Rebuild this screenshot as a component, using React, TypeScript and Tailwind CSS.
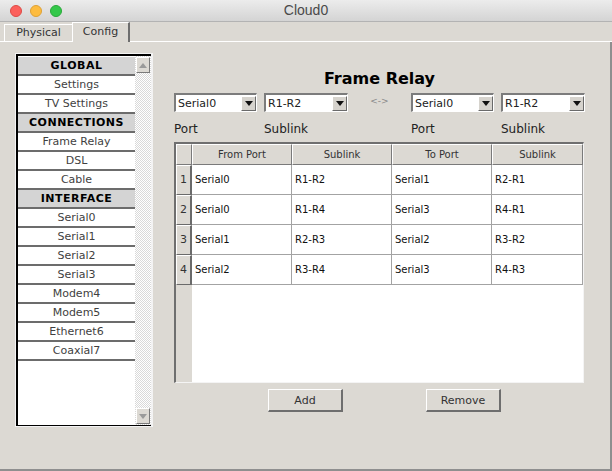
import React from 'react';

type SideItem = { label: string; header?: boolean };

const sideItems: SideItem[] = [
  { label: 'GLOBAL', header: true },
  { label: 'Settings' },
  { label: 'TV Settings' },
  { label: 'CONNECTIONS', header: true },
  { label: 'Frame Relay' },
  { label: 'DSL' },
  { label: 'Cable' },
  { label: 'INTERFACE', header: true },
  { label: 'Serial0' },
  { label: 'Serial1' },
  { label: 'Serial2' },
  { label: 'Serial3' },
  { label: 'Modem4' },
  { label: 'Modem5' },
  { label: 'Ethernet6' },
  { label: 'Coaxial7' },
];

const rows = [
  ['Serial0', 'R1-R2', 'Serial1', 'R2-R1'],
  ['Serial0', 'R1-R4', 'Serial3', 'R4-R1'],
  ['Serial1', 'R2-R3', 'Serial2', 'R3-R2'],
  ['Serial2', 'R3-R4', 'Serial3', 'R4-R3'],
];

const colWidths = ['w-[100px]', 'w-[100px]', 'w-[100px]', 'w-[91px]'];

function Combo({ value, wide }: { value: string; wide?: boolean }) {
  return (
    <div
      className={`${wide ? 'w-[84px]' : 'w-[83px]'} h-[19px] flex items-center bg-white border-t-2 border-l-2 border-t-[#7c7c7c] border-l-[#7c7c7c] border-r border-b border-r-white border-b-white`}
    >
      <span className="flex-1 pl-[2px] pt-px text-[11px] leading-[15px] text-[#222]">{value}</span>
      <div className="w-[15px] h-[15px] flex items-center justify-center bg-[#d6d3cd] border-t border-l border-white border-r border-b border-r-[#6a6a6a] border-b-[#6a6a6a]">
        <svg width="8" height="5" viewBox="0 0 8 5">
          <path d="M0 0 H8 L4 5 Z" fill="#111" />
        </svg>
      </div>
    </div>
  );
}

function ScrollButton({ up }: { up?: boolean }) {
  return (
    <div className="w-[14px] h-[16px] mx-auto flex items-center justify-center bg-[#dcd9d3] border-t border-l border-white border-r border-b border-r-[#7a7a7a] border-b-[#7a7a7a]">
      <svg width="8" height="5" viewBox="0 0 8 5">
        <path d={up ? 'M0 5 H8 L4 0 Z' : 'M0 0 H8 L4 5 Z'} fill="#9a9a9a" />
      </svg>
    </div>
  );
}

function SideList() {
  return (
    <div className="w-[138px] h-[374px] border border-[#f3f3f3] border-r-2">
      <div className="h-full flex border-t-2 border-l-2 border-b border-black">
        <div className="flex-1 bg-white flex flex-col pt-px">
          {sideItems.map((item) =>
            item.header ? (
              <div
                key={item.label}
                className="h-[19px] bg-[#d4d4d4] border-b-2 border-[#6c6c6c] text-center text-[11px] leading-[18px] font-bold tracking-[0.5px] text-black"
              >
                {item.label}
              </div>
            ) : (
              <div
                key={item.label}
                className="h-[19px] border-b-2 border-[#6c6c6c] text-center text-[11px] leading-[18px] text-[#3f3f3f]"
              >
                {item.label}
              </div>
            )
          )}
        </div>
        <div className="w-[16px] flex flex-col justify-between py-px bg-[repeating-conic-gradient(#d9d9d9_0%_25%,#ffffff_0%_50%)] bg-[length:2px_2px]">
          <ScrollButton up />
          <ScrollButton />
        </div>
      </div>
    </div>
  );
}

function HeaderCell({ w, label }: { w: string; label: string }) {
  return (
    <div
      className={`${w} h-[21px] bg-[#dcd9d3] border-t border-l border-white border-r border-b border-r-[#7a7a7a] border-b-[#7a7a7a] text-center text-[10px] leading-[19px] text-[#333]`}
    >
      {label}
    </div>
  );
}

function RoutesTable() {
  return (
    <div className="w-[410px] h-[241px] flex flex-col bg-white border-t-2 border-l-2 border-t-[#6f6f6f] border-l-[#6f6f6f] border-r border-b border-r-[#f4f4f4] border-b-[#f4f4f4]">
      <div className="flex">
        <div className="w-[16px] h-[21px] bg-[#dcd9d3] border-t border-l border-white border-r border-b border-r-[#7a7a7a] border-b-[#7a7a7a]" />
        <HeaderCell w={colWidths[0]} label="From Port" />
        <HeaderCell w={colWidths[1]} label="Sublink" />
        <HeaderCell w={colWidths[2]} label="To Port" />
        <HeaderCell w={colWidths[3]} label="Sublink" />
      </div>
      {rows.map((r, i) => (
        <div key={i} className="flex h-[30px]">
          <div className="w-[16px] bg-[#dcd9d3] border-t border-l border-white border-r-2 border-b border-r-[#6a6a6a] border-b-[#6a6a6a] flex items-center justify-center text-[11px] text-[#333]">
            {i + 1}
          </div>
          {r.map((c, j) => (
            <div
              key={j}
              className={`${colWidths[j]} border-r border-b border-[#a3a3a3] flex items-center pl-[3px] text-[10px] text-[#111]`}
            >
              {c}
            </div>
          ))}
        </div>
      ))}
      <div className="flex-1 flex">
        <div className="w-[16px] bg-[#dcd9d3]" />
        <div className="flex-1 bg-white" />
      </div>
    </div>
  );
}

function Button({ label }: { label: string }) {
  return (
    <button className="w-[75px] h-[23px] pt-[2px] bg-[#dcd9d3] border-t border-l border-white border-r-2 border-b-2 border-r-[#6e6e6e] border-b-[#6e6e6e] text-[11px] leading-[16px] text-[#333]">
      {label}
    </button>
  );
}

export default function App() {
  return (
    <div className="w-[612px] h-[471px] flex flex-col bg-[#dcd9d3] font-['DejaVu_Sans',sans-serif] overflow-hidden">
      {/* window title bar */}
      <div className="h-[22px] grid grid-cols-[1fr_auto_1fr] items-center bg-gradient-to-b from-[#ececec] to-[#d4d4d4] border-b border-[#b3b3b3]">
        <div className="flex items-center gap-[8px] pl-[10px]">
          <span className="w-[12px] h-[12px] rounded-full bg-[#fc605c] border border-[#de4a45]" />
          <span className="w-[12px] h-[12px] rounded-full bg-[#fdbc40] border border-[#dea135]" />
          <span className="w-[12px] h-[12px] rounded-full bg-[#34c84a] border border-[#29a93a]" />
        </div>
        <span className="font-['Liberation_Sans',sans-serif] text-[14px] text-[#4a4a4a]">Cloud0</span>
        <div />
      </div>

      {/* tabs */}
      <div className="h-[20px] flex items-end">
        <div className="w-[4px] h-px bg-white" />
        <div className="w-[68px] h-[18px] border-t border-l border-b border-white text-center text-[11px] leading-[16px] text-[#333]">
          Physical
        </div>
        <div className="w-[58px] h-[20px] border-t border-l border-white border-r-2 border-r-[#6e6e6e] text-center text-[11px] leading-[17px] text-[#333]">
          Config
        </div>
        <div className="flex-1 h-px bg-white" />
      </div>

      {/* config panel */}
      <div className="flex-1 flex pt-[11px] pl-[15px] border-r-2 border-b-2 border-[#8f8f8f]">
        <SideList />

        <div className="ml-[21px] w-[411px] flex flex-col">
          <div className="mt-[16px] h-[20px] text-center text-[16px] leading-[20px] font-bold text-black">
            Frame Relay
          </div>

          <div className="mt-[4px] flex items-center">
            <Combo value="Serial0" />
            <div className="ml-[7px]">
              <Combo value="R1-R2" wide />
            </div>
            <div className="w-[63px] text-center text-[9px] leading-[19px] text-[#8a8a8a] -mt-[3px]">{'<->'}</div>
            <Combo value="Serial0" />
            <div className="ml-[7px]">
              <Combo value="R1-R2" wide />
            </div>
          </div>

          <div className="mt-[10px] flex h-[14px] text-[12px] leading-[14px] text-[#222]">
            <span className="w-[90px]">Port</span>
            <span className="w-[147px]">Sublink</span>
            <span className="w-[90px]">Port</span>
            <span>Sublink</span>
          </div>

          <div className="mt-[6px]">
            <RoutesTable />
          </div>

          <div className="mt-[6px] flex pl-[94px] gap-[83px]">
            <Button label="Add" />
            <Button label="Remove" />
          </div>
        </div>
      </div>
    </div>
  );
}
